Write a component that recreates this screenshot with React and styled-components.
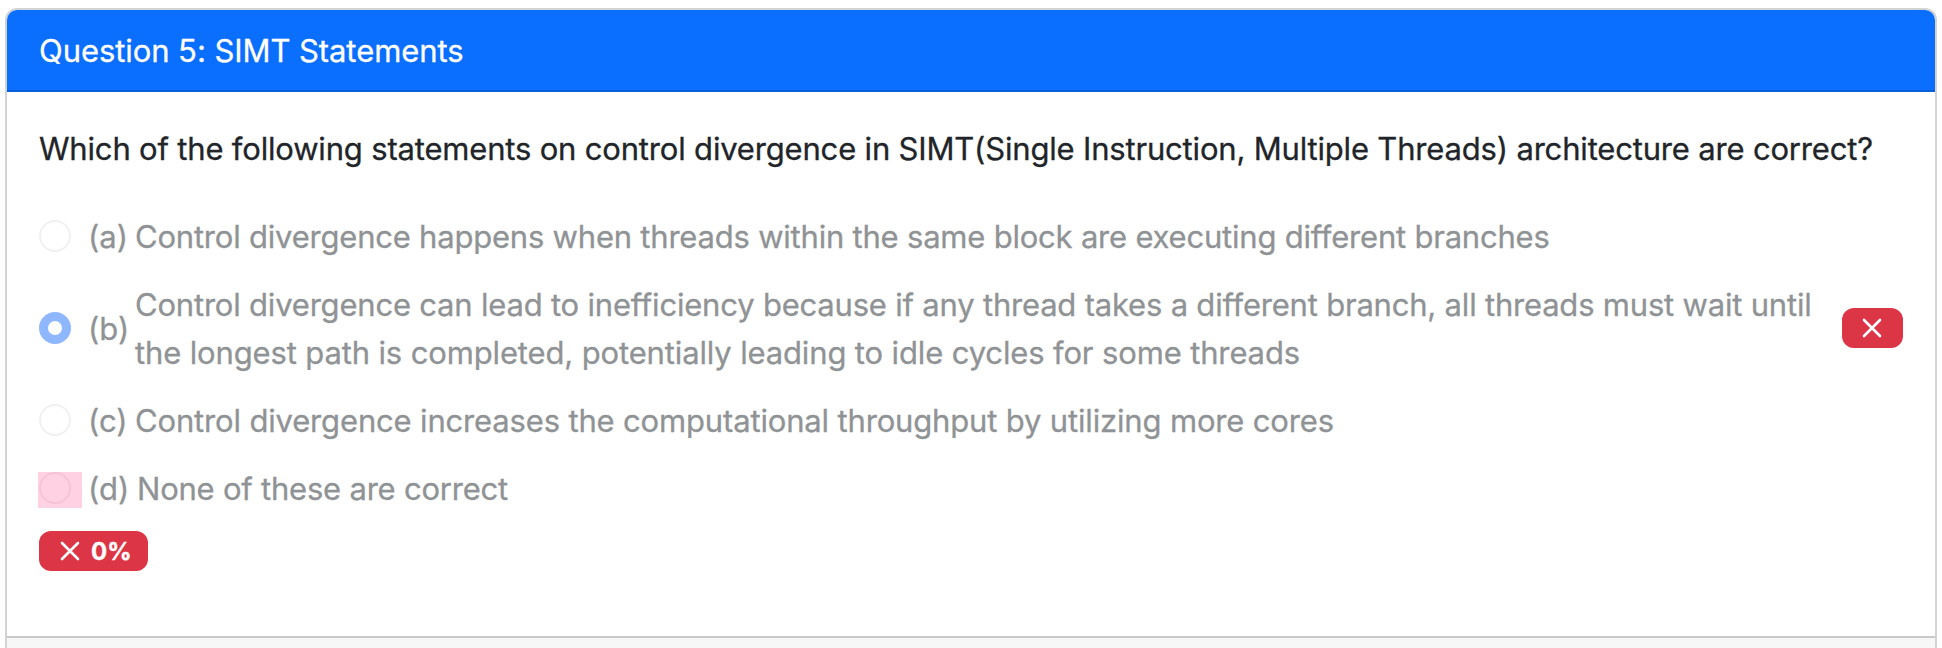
import React from "react";
import styled, { createGlobalStyle } from "styled-components";

const GlobalStyle = createGlobalStyle`
  *, *::before, *::after { box-sizing: border-box; }
  html, body { margin: 0; background: #fff; }
  body {
    font-family: Inter, "Noto Sans", sans-serif;
    font-size: 31px;
    font-weight: 400;
    -webkit-text-stroke: 0.3px currentColor;
    line-height: 48px;
    color: #212529;
    height: 648px;
    overflow: hidden;
  }
`;

const Card = styled.article`
  margin: 8px 5px 0;
  border: 2px solid #d2d3d4;
  border-bottom: 0;
  border-radius: 12px 12px 0 0;
  overflow: hidden;
  height: 640px;
  display: flex;
  flex-direction: column;
`;

const CardHeader = styled.header`
  padding: 17px 32px 15px;
  height: 82px;
  color: #fff;
  background: #0a6eff;
  border-bottom: 2px solid #095fda;
  flex: none;
`;

const CardBody = styled.section`
  flex: none;
  height: 544px;
  padding: 33px 32px 32px;
`;

const CardFooter = styled.footer`
  flex: 1;
  background: #f7f7f7;
  border-top: 2px solid #c8c9ca;
`;

const Text = styled.span`
  white-space: pre;
  letter-spacing: ${(p) => p.$tracking || 0}px;
`;

const Prompt = styled.p`
  margin: 0 0 39px;
`;

const Options = styled.div`
  display: flex;
  flex-direction: column;
  gap: 20px;
`;

const Option = styled.div`
  display: flex;
  align-items: center;
  color: #909395;
`;

const RadioCell = styled.span`
  flex: none;
  width: 44px;
  height: 36px;
  margin: 4px 6px 0 -1px;
  padding-left: 1px;
  background: ${(p) => (p.$marked ? "#ffd1e3" : "transparent")};
`;

const Radio = styled.span`
  display: block;
  width: 32px;
  height: 32px;
  border-radius: 50%;
  border: ${(p) =>
    p.$checked ? "9px solid #8fb7ff" : `2px solid ${p.$marked ? "#f6c4d7" : "#eef0f2"}`};
`;

const Key = styled.span`
  flex: none;
  width: ${(p) => p.$width}px;
  padding-top: 1px;
  margin-bottom: -1px;
`;

const Label = styled.span`
  display: flex;
  flex-direction: column;
  flex: 1;
  padding-top: 1px;
  margin-bottom: -1px;
`;

const Badge = styled.span`
  display: inline-flex;
  align-items: center;
  flex: none;
  height: 40px;
  width: ${(p) => (p.$wide ? 109 : 61)}px;
  padding-left: ${(p) => (p.$wide ? 21 : 20)}px;
  gap: 11px;
  border-radius: 12px;
  background: #dc3546;
  color: #fff;
  font-size: 24px;
  font-weight: 700;
  line-height: 40px;
`;

const Percent = styled.span`
  padding-top: 1px;
  margin-bottom: -1px;
`;

const Score = styled.div`
  display: flex;
  margin-top: 19px;
`;

const CrossSvg = styled.svg`
  flex: none;
  display: block;
`;

const Cross = () => (
  <CrossSvg width="20" height="20" viewBox="0 0 20 20" fill="none" aria-hidden="true">
    <path d="M2 2l16 16M18 2L2 18" stroke="#fff" strokeWidth="2.6" strokeLinecap="round" />
  </CrossSvg>
);

const OPTIONS = [
  {
    key: "(a)",
    keyWidth: 47,
    lines: [["Control divergence happens when threads within the same block are executing different branches", -0.21]],
  },
  {
    key: "(b)",
    keyWidth: 47,
    checked: true,
    lines: [
      ["Control divergence can lead to inefficiency because if any thread takes a different branch, all threads must wait until", -0.2],
      ["the longest path is completed, potentially leading to idle cycles for some threads", -0.14],
    ],
  },
  {
    key: "(c)",
    keyWidth: 47,
    lines: [["Control divergence increases the computational throughput by utilizing more cores", -0.16]],
  },
  {
    key: "(d)",
    keyWidth: 49,
    marked: true,
    lines: [["None of these are correct", -0.22]],
  },
];

export default function App() {
  return (
    <>
      <GlobalStyle />
      <Card>
        <CardHeader>
          <Text $tracking={-0.07}>Question 5: SIMT Statements</Text>
        </CardHeader>
        <CardBody>
          <Prompt>
            <Text $tracking={-0.178}>
              Which of the following statements on control divergence in SIMT(Single Instruction, Multiple Threads) architecture are correct?
            </Text>
          </Prompt>
          <Options>
            {OPTIONS.map((o) => (
              <Option key={o.key}>
                <RadioCell $marked={o.marked}>
                  <Radio $checked={o.checked} $marked={o.marked} />
                </RadioCell>
                <Key $width={o.keyWidth}>{o.key}</Key>
                <Label>
                  {o.lines.map(([line, tracking]) => (
                    <Text key={line} $tracking={tracking}>{line}</Text>
                  ))}
                </Label>
                {o.checked && (
                  <Badge>
                    <Cross />
                  </Badge>
                )}
              </Option>
            ))}
          </Options>
          <Score>
            <Badge $wide>
              <Cross />
              <Percent>0%</Percent>
            </Badge>
          </Score>
        </CardBody>
        <CardFooter />
      </Card>
    </>
  );
}
